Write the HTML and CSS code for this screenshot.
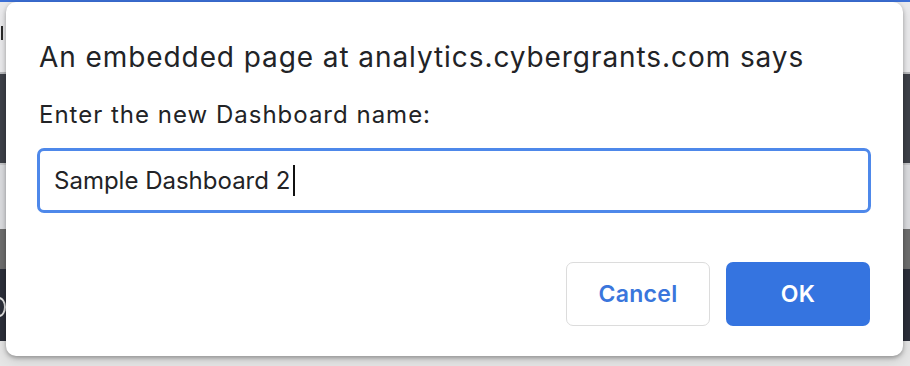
FILE: index.html
```html
<!DOCTYPE html>
<html lang="en">
<head>
    <meta charset="UTF-8">
    <meta name="viewport" content="width=device-width, initial-scale=1.0">
    <title>Rename Dashboard</title>
    <link rel="stylesheet" href="styles.css">
</head>
<body>
    <!-- page behind the prompt, mostly covered -->
    <div class="page">
        <div class="topline"></div>
        <div class="band band-light"><span class="stub-i"></span></div>
        <div class="band band-dark"></div>
        <div class="band band-pale"></div>
        <div class="band band-mid"></div>
        <div class="band band-navy"><span class="stub-c"></span></div>
        <div class="band band-foot"></div>
    </div>

    <div class="dialog">
        <h1 class="dialog-title">An embedded page at analytics.cybergrants.com says</h1>
        <p class="dialog-message">Enter the new Dashboard name:</p>
        <div class="dialog-input"><span>Sample Dashboard 2</span><span class="caret"></span></div>
        <div class="dialog-actions">
            <button class="btn btn-cancel">Cancel</button>
            <button class="btn btn-ok">OK</button>
        </div>
    </div>
</body>
</html>
```

FILE: styles.css
```css
body {
    margin: 0;
    padding: 0;
    width: 910px;
    height: 366px;
    overflow: hidden;
    position: relative;
    font-family: Inter, "Noto Sans", sans-serif;
    color: #222326;
}
.page {
    display: flex;
    flex-direction: column;
    height: 366px;
}
.topline {
    height: 2px;
    background: #3b6fd6;
}
.band {
    position: relative;
    overflow: hidden;
}
.band-light {
    height: 70px;
    background: #ebebed;
    border-bottom: 2px solid #b9babd;
}
.band-dark {
    height: 89px;
    background: #3e4149;
    border-bottom: 2px solid #c6c7ca;
}
.band-pale {
    height: 64px;
    background: #dcdde0;
}
.band-mid {
    height: 40px;
    background: #6e6e6e;
}
.band-navy {
    height: 72px;
    background: #2c2f3a;
}
.band-foot {
    flex: 1;
    background: #e6e6e6;
}
/* bits of glyphs from the page that peek out at the left edge */
.stub-i {
    position: absolute;
    left: 1px;
    top: 24px;
    width: 2px;
    height: 14px;
    background: #2a2a2a;
}
.stub-c {
    position: absolute;
    left: -8px;
    top: 28px;
    width: 10px;
    height: 16px;
    border: 2px solid #e4e4e4;
    border-radius: 50%;
}
.dialog {
    position: absolute;
    left: 6px;
    top: 2px;
    width: 897px;
    height: 354px;
    box-sizing: border-box;
    padding: 38px 33px 0 33px;
    background: #ffffff;
    border-radius: 10px;
    box-shadow: 0 2px 4px rgba(0, 0, 0, 0.3), 0 4px 14px rgba(0, 0, 0, 0.12);
}
.dialog-title {
    margin: 0;
    font-size: 28px;
    font-weight: 400;
    letter-spacing: 0.92px;
    line-height: 34px;
}
.dialog-message {
    margin: 27px 0 0 0;
    font-size: 24px;
    letter-spacing: 1px;
    line-height: 28px;
}
.dialog-input {
    margin: 19px 0 0 -2px;
    height: 65px;
    width: 834px;
    box-sizing: border-box;
    border: 3px solid #4e88ea;
    border-radius: 7px;
    padding: 0 0 0 14px;
    display: flex;
    align-items: center;
    font-size: 24px;
    letter-spacing: 0;
}
.caret {
    display: inline-block;
    width: 2px;
    height: 31px;
    margin-left: 3px;
    background: #111;
}
.dialog-actions {
    display: flex;
    justify-content: flex-end;
    gap: 16px;
    margin-top: 49px;
    width: 831px;
}
.btn {
    width: 144px;
    height: 64px;
    border-radius: 7px;
    font-family: Inter, "Noto Sans", sans-serif;
    font-size: 23px;
    font-weight: 600;
    letter-spacing: 0.3px;
    cursor: pointer;
}
.btn-cancel {
    background: #ffffff;
    border: 1px solid #dcdcdc;
    color: #3a76dc;
}
.btn-ok {
    background: #3574e0;
    border: none;
    color: #ffffff;
}
```
